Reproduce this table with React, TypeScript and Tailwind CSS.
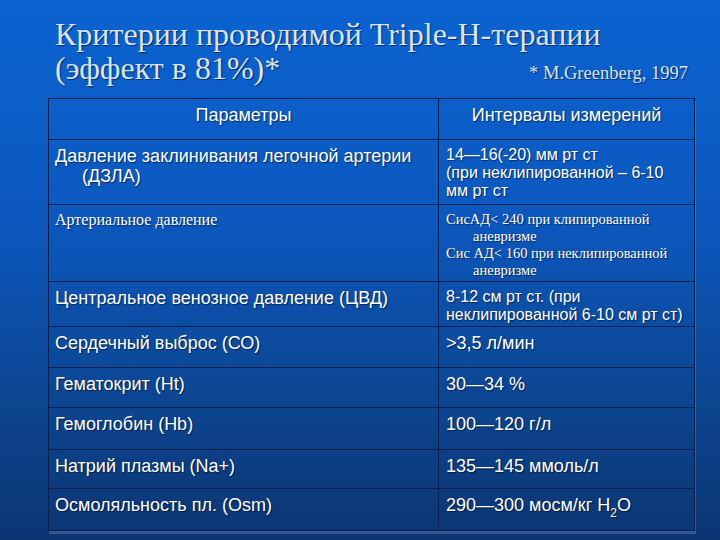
import React from "react";

const sans = "font-['Liberation_Sans',Arial,sans-serif]";
const serif = "font-['Liberation_Serif','Times_New_Roman',serif]";

type Row = { h: number; left: React.ReactNode; right: React.ReactNode };

const Hang = ({ first, rest, cls }: { first: string; rest: string; cls: string }) => (
  <div className={cls}>
    <div>{first}</div>
    <div className="pl-[27px]">{rest}</div>
  </div>
);

export default function App() {
  const big = `${sans} text-[18px] leading-[20px] text-white`;
  const mid = `${sans} text-[16px] leading-[18px] text-white`;
  const sm = `${serif} text-[14.5px] leading-[17px] text-white`;
  const smL = `${serif} text-[16px] leading-[17px] text-white`;

  const rows: Row[] = [
    {
      h: 65,
      left: <Hang first="Давление заклинивания легочной артерии" rest="(ДЗЛА)" cls={big} />,
      right: (
        <div className={mid}>
          <div>14—16(-20) мм рт ст</div>
          <div>(при неклипированной – 6-10</div>
          <div>мм рт ст</div>
        </div>
      ),
    },
    {
      h: 77,
      left: <div className={smL}>Артериальное давление</div>,
      right: (
        <div className={sm}>
          <div>СисАД&lt; 240 при клипированной</div>
          <div className="pl-[27px]">аневризме</div>
          <div>Сис АД&lt; 160 при неклипированной</div>
          <div className="pl-[27px]">аневризме</div>
        </div>
      ),
    },
    {
      h: 45,
      left: <div className={big}>Центральное венозное давление (ЦВД)</div>,
      right: (
        <div className={mid}>
          <div>8-12 см рт ст. (при</div>
          <div>неклипированной 6-10 см рт ст)</div>
        </div>
      ),
    },
    { h: 41, left: <div className={big}>Сердечный выброс (СО)</div>, right: <div className={big}>&gt;3,5 л/мин</div> },
    { h: 40, left: <div className={big}>Гематокрит (Ht)</div>, right: <div className={big}>30—34 %</div> },
    { h: 42, left: <div className={big}>Гемоглобин (Hb)</div>, right: <div className={big}>100—120 г/л</div> },
    { h: 39, left: <div className={big}>Натрий плазмы (Na+)</div>, right: <div className={big}>135—145 ммоль/л</div> },
    {
      h: 41,
      left: <div className={big}>Осмоляльность пл. (Osm)</div>,
      right: (
        <div className={big}>
          290—300 мосм/кг H<sub className="text-[12px] align-[-3px] leading-none">2</sub>O
        </div>
      ),
    },
  ];

  return (
    <div className="w-[720px] h-[540px] overflow-hidden bg-[linear-gradient(180deg,#0b63d1_0%,#0c58bf_40%,#0c4590_75%,#0c3572_100%)] [text-shadow:1px_1px_1px_rgba(0,0,20,0.55)]">
      <div className="pt-[17px] pl-[55px] pr-[32px]">
        <div className={`${serif} text-[32px] leading-[34px] text-[#dbe3f0]`}>
          Критерии проводимой Triple-H-терапии
        </div>
        <div className="flex items-baseline justify-between">
          <div className={`${serif} text-[32px] leading-[34px] text-[#dbe3f0]`}>(эффект в 81%)*</div>
          <div className={`${serif} text-[18.5px] leading-[20px] text-[#dbe3f0]`}>* M.Greenberg, 1997</div>
        </div>
      </div>
      <div className="mt-[13px] ml-[48px] w-[647px]">
        <div className="border border-[#0a1f4d] shadow-[1px_3px_0_0_rgba(120,150,210,0.35)]">
          <div className="grid grid-cols-[390px_1fr] h-[41px] border-b border-[#0a1f4d]">
            <div className="border-r border-[#0a1f4d] pt-[6px] text-center">
              <div className={big}>Параметры</div>
            </div>
            <div className="pt-[6px] text-center">
              <div className={big}>Интервалы измерений</div>
            </div>
          </div>
          {rows.map((r, i) => (
            <div
              key={i}
              className={`grid grid-cols-[390px_1fr] ${i < rows.length - 1 ? "border-b" : ""} border-[#0a1f4d]`}
              style={{ height: r.h }}
            >
              <div className="border-r border-[#0a1f4d] pt-[6px] pl-[6px]">{r.left}</div>
              <div className="pt-[6px] pl-[7px]">{r.right}</div>
            </div>
          ))}
        </div>
      </div>
    </div>
  );
}
